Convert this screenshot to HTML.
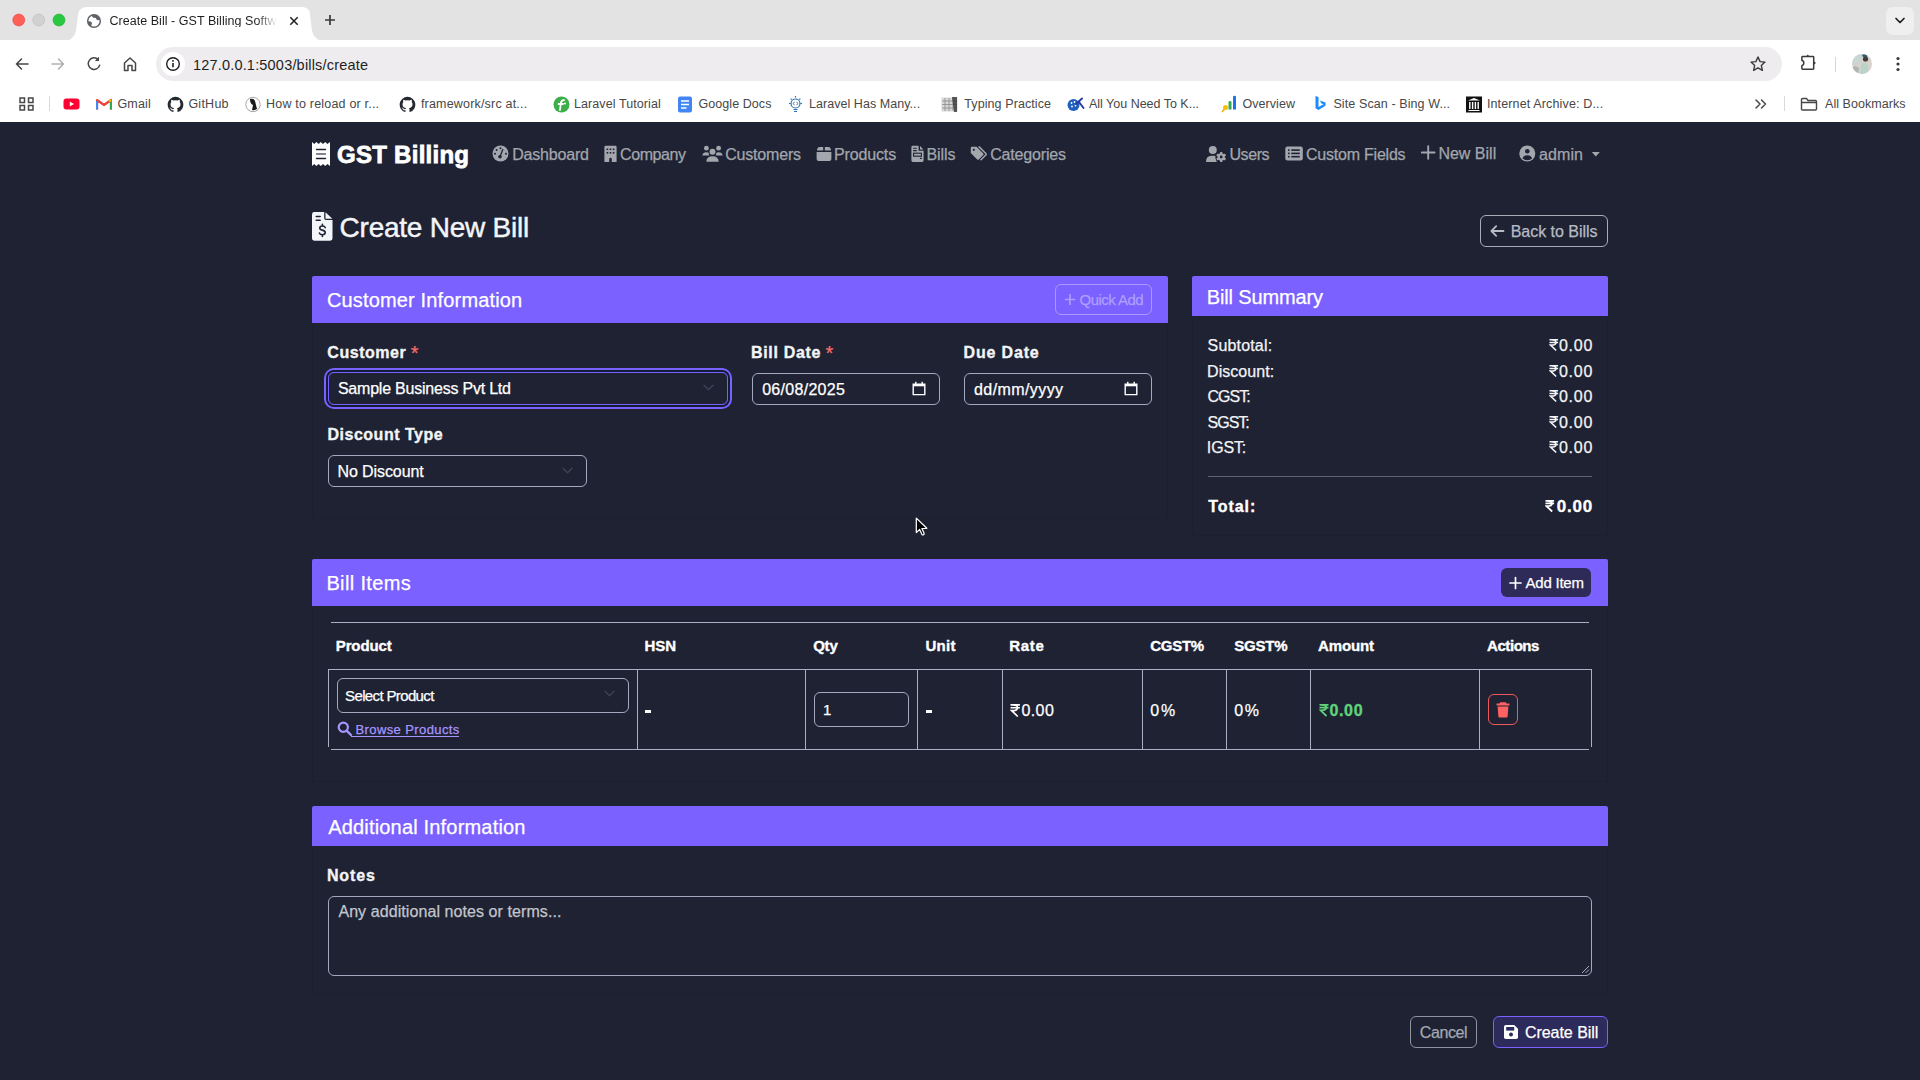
<!DOCTYPE html>
<html><head><meta charset="utf-8"><title>Create Bill - GST Billing Software</title>
<style>
html,body{margin:0;padding:0;width:1920px;height:1080px;overflow:hidden;background:#1e2233}
body{position:relative;font-family:"Liberation Sans",sans-serif}
.a{position:absolute;display:block}
.t{position:absolute;white-space:nowrap;line-height:1;font-family:"Liberation Sans",sans-serif}
.s{-webkit-text-stroke:0.25px currentColor}
.sb{-webkit-text-stroke:0.35px currentColor}
.brand{-webkit-text-stroke:0.8px currentColor}
</style></head><body>
<div class="a" style="left:0px;top:0px;width:1920px;height:41px;background:#e3e3e3"></div>
<div class="a" style="left:0px;top:40px;width:1920px;height:82px;background:#ffffff"></div>
<svg class="a" style="left:62px;top:0px;" width="264" height="41" viewBox="0 0 264 41"><path d="M0 41 Q12 41 14 31 L16 15 Q17 7 25 7 L240 7 Q248 7 248 15 L250 31 Q252 41 264 41 Z" fill="#fff"/></svg>
<svg class="a" style="left:10px;top:12px;" width="58" height="16" viewBox="0 0 58 16"><circle cx="8.75" cy="8" r="6" fill="#ff5f57" stroke="#e14640" stroke-width="0.6"/><circle cx="28.75" cy="8" r="6" fill="#d1d1d1" stroke="#bcbcbc" stroke-width="0.6"/><circle cx="49" cy="8" r="6" fill="#28c840" stroke="#1fa934" stroke-width="0.6"/></svg>
<svg class="a" style="left:86px;top:13px;" width="16" height="16" viewBox="0 0 16 16"><circle cx="8" cy="8" r="6.3" fill="none" stroke="#5f6368" stroke-width="1.5"/><path d="M6.2 1.8 Q11.5 1.2 14 6.2 Q12.8 7.6 11.2 7 Q9.8 6.2 10 5 Q9 4.6 7.2 4.8 Q5.6 4 6.2 1.8 Z" fill="#5f6368"/><path d="M1.6 8.6 Q3.4 8 5 8.8 Q6.6 9.6 5.8 11 Q5 12 5.6 14.3 Q2 12.8 1.6 8.6 Z" fill="#5f6368"/></svg>
<span class="t " style="left:109.38px;top:14.600000000000001px;font-size:12.5px;color:#1f1f1f;letter-spacing:0.044px;-webkit-mask-image:linear-gradient(90deg,#000 148px,transparent 168px);mask-image:linear-gradient(90deg,#000 148px,transparent 168px);">Create Bill - GST Billing Softw</span>
<svg class="a" style="left:289px;top:16px;" width="10" height="10" viewBox="0 0 10 10"><path d="M1.3 1.3 L8.7 8.7 M8.7 1.3 L1.3 8.7" stroke="#1f1f1f" stroke-width="1.5" stroke-linecap="butt"/></svg>
<svg class="a" style="left:324px;top:14px;" width="12" height="12" viewBox="0 0 12 12"><path d="M6 1 V11 M1 6 H11" stroke="#3b3b3b" stroke-width="1.7"/></svg>
<div class="a" style="left:1886px;top:7px;width:28px;height:28px;background:#efefef;border-radius:7px"></div>
<svg class="a" style="left:1894px;top:16px;" width="12" height="10" viewBox="0 0 12 10"><path d="M2 2.5 L6 6.5 L10 2.5" stroke="#1f1f1f" stroke-width="1.7" fill="none" stroke-linecap="round" stroke-linejoin="round"/></svg>
<svg class="a" style="left:14px;top:56px;" width="16" height="16" viewBox="0 0 16 16"><path d="M14 8 H2.5 M7.5 3 L2.5 8 L7.5 13" stroke="#474747" stroke-width="1.6" fill="none" stroke-linecap="round" stroke-linejoin="round"/></svg>
<svg class="a" style="left:50px;top:56px;" width="16" height="16" viewBox="0 0 16 16"><path d="M2 8 H13.5 M8.5 3 L13.5 8 L8.5 13" stroke="#b1b1b1" stroke-width="1.6" fill="none" stroke-linecap="round" stroke-linejoin="round"/></svg>
<svg class="a" style="left:86px;top:56px;" width="16" height="16" viewBox="0 0 16 16"><path d="M13.8 8.6 A5.8 5.8 0 1 1 12.3 3.6" stroke="#474747" stroke-width="1.5" fill="none"/><path d="M13 0.8 V5 H8.8 Z" fill="#474747"/></svg>
<svg class="a" style="left:122px;top:56px;" width="16" height="16" viewBox="0 0 16 16"><path d="M2.5 14.5 V7 L8 2 L13.5 7 V14.5 H10 V9.5 H6 V14.5 Z" stroke="#474747" stroke-width="1.5" fill="none" stroke-linejoin="round"/></svg>
<div class="a" style="left:156px;top:47px;width:1626px;height:34px;background:#eeecee;border-radius:17px"></div>
<div class="a" style="left:161px;top:52px;width:24px;height:24px;background:#ffffff;border-radius:12px"></div>
<svg class="a" style="left:165px;top:56px;" width="16" height="16" viewBox="0 0 16 16"><circle cx="8" cy="8" r="6.3" stroke="#1f1f1f" stroke-width="1.4" fill="none"/><path d="M8 7 V11.3" stroke="#1f1f1f" stroke-width="1.6"/><circle cx="8" cy="4.9" r="0.95" fill="#1f1f1f"/></svg>
<span class="t " style="left:192.91px;top:58px;font-size:14.5px;color:#1f1f1f;letter-spacing:0.195px;">127.0.0.1:5003/bills/create</span>
<svg class="a" style="left:1749px;top:55px;" width="18" height="18" viewBox="0 0 18 18"><path d="M9 2 L11.1 6.6 L16 7.1 L12.3 10.4 L13.4 15.3 L9 12.8 L4.6 15.3 L5.7 10.4 L2 7.1 L6.9 6.6 Z" stroke="#3a3a3a" stroke-width="1.4" fill="none" stroke-linejoin="round"/></svg>
<svg class="a" style="left:1800px;top:54px;" width="18" height="18" viewBox="0 0 18 18"><path d="M1.9 3.2 Q1.9 2.6 2.5 2.6 H13.1 Q13.7 2.6 13.7 3.2 V14.6 Q13.7 15.2 13.1 15.2 H2.5 Q1.9 15.2 1.9 14.6 V11.4 Q3.8 11.2 3.8 9 Q3.8 6.8 1.9 6.6 Z" stroke="#3a3a3a" stroke-width="1.5" fill="none" stroke-linejoin="round"/><path d="M5.9 2.8 L7.8 0.5 L9.7 2.8 Z M13.5 6.9 L16 8.9 L13.5 10.9 Z" fill="#3a3a3a"/></svg>
<div class="a" style="left:1835px;top:57px;width:1px;height:15px;background:#d6d6d6"></div>
<svg class="a" style="left:1851px;top:53px;" width="22" height="22" viewBox="0 0 22 22"><defs><clipPath id="avc"><circle cx="11" cy="11" r="10"/></clipPath></defs><g clip-path="url(#avc)"><rect width="22" height="22" fill="#d8d2cc"/><path d="M0 0 H22 V8 Q15 5 10 9 Q5 12 0 10 Z" fill="#c9d6d2"/><path d="M9 22 L10 12 Q11 9 14 10 Q17 11 17 15 L18 22 Z" fill="#b9d3c8"/><circle cx="14.5" cy="6" r="2.6" fill="#4b3b36"/><path d="M11 2 Q14 0 17 2 L16 4 L12 4 Z" fill="#2f5b6a"/><path d="M2 14 Q5 12 8 15 L7 22 H1 Z" fill="#9aa8a4" opacity="0.7"/></g></svg>
<svg class="a" style="left:1892px;top:55px;" width="12" height="18" viewBox="0 0 12 18"><circle cx="6" cy="3.5" r="1.6" fill="#3a3a3a"/><circle cx="6" cy="9" r="1.6" fill="#3a3a3a"/><circle cx="6" cy="14.5" r="1.6" fill="#3a3a3a"/></svg>
<svg class="a" style="left:19px;top:97px;" width="15" height="14" viewBox="0 0 15 14"><g fill="none" stroke="#474747" stroke-width="1.5"><rect x="1" y="1" width="4.5" height="4.5"/><rect x="9.5" y="1" width="4.5" height="4.5"/><rect x="1" y="8.5" width="4.5" height="4.5"/><rect x="9.5" y="8.5" width="4.5" height="4.5"/></g></svg>
<div class="a" style="left:49px;top:96px;width:1px;height:15px;background:#d9d9d9"></div>
<svg class="a" style="left:63px;top:98px;" width="18" height="12" viewBox="0 0 18 12"><rect x="0.5" y="0.5" width="16" height="11" rx="3" fill="#ff0033"/><path d="M6.8 3.5 L11 6 L6.8 8.5 Z" fill="#fff"/></svg>
<svg class="a" style="left:96px;top:98px;" width="16" height="12" viewBox="0 0 16 12"><path d="M1 11.5 V2 L8 7 L15 2 V11.5" fill="none" stroke="#ea4335" stroke-width="2.2" stroke-linejoin="round"/><path d="M1 11.5 V3" stroke="#4285f4" stroke-width="2.2"/><path d="M15 11.5 V3" stroke="#34a853" stroke-width="2.2"/><path d="M13 3.5 L15 2" stroke="#fbbc04" stroke-width="2.2"/></svg>
<span class="t " style="left:117.38px;top:97.7px;font-size:12.5px;color:#474747;letter-spacing:0.188px;">Gmail</span>
<svg class="a" style="left:167px;top:96px;" width="17" height="17" viewBox="0 0 17 17"><path d="M8.5 0.8 A7.8 7.8 0 0 0 6 16 C6.4 16.1 6.5 15.8 6.5 15.6 V14.2 C4.3 14.7 3.9 13.2 3.9 13.2 C3.5 12.3 3 12 3 12 C2.3 11.5 3.1 11.5 3.1 11.5 C3.9 11.6 4.3 12.3 4.3 12.3 C5 13.5 6.1 13.2 6.6 13 C6.6 12.5 6.9 12.2 7.1 12 C5.3 11.8 3.5 11.1 3.5 8 C3.5 7.1 3.8 6.4 4.3 5.9 C4.2 5.7 3.9 4.9 4.4 3.8 C4.4 3.8 5.1 3.6 6.5 4.6 A7.5 7.5 0 0 1 10.5 4.6 C11.9 3.6 12.6 3.8 12.6 3.8 C13.1 4.9 12.8 5.7 12.7 5.9 C13.2 6.4 13.5 7.1 13.5 8 C13.5 11.1 11.7 11.8 9.9 12 C10.2 12.2 10.5 12.7 10.5 13.5 V15.6 C10.5 15.8 10.6 16.1 11 16 A7.8 7.8 0 0 0 8.5 0.8 Z" fill="#24292f"/></svg>
<span class="t " style="left:188.38px;top:97.7px;font-size:12.5px;color:#474747;letter-spacing:0.250px;">GitHub</span>
<svg class="a" style="left:245px;top:96px;" width="16" height="17" viewBox="0 0 16 17"><circle cx="8" cy="8.5" r="7.2" fill="none" stroke="#9a9a9a" stroke-width="0.9"/><path d="M5 3 Q9 2 10 5 L12 13 Q9 15 7 14 L8 9 Q5 8 5 3 Z" fill="#1a1a1a"/></svg>
<span class="t " style="left:266.00px;top:97.7px;font-size:12.5px;color:#474747;letter-spacing:0.200px;">How to reload or r...</span>
<svg class="a" style="left:399px;top:96px;" width="17" height="17" viewBox="0 0 17 17"><path d="M8.5 0.8 A7.8 7.8 0 0 0 6 16 C6.4 16.1 6.5 15.8 6.5 15.6 V14.2 C4.3 14.7 3.9 13.2 3.9 13.2 C3.5 12.3 3 12 3 12 C2.3 11.5 3.1 11.5 3.1 11.5 C3.9 11.6 4.3 12.3 4.3 12.3 C5 13.5 6.1 13.2 6.6 13 C6.6 12.5 6.9 12.2 7.1 12 C5.3 11.8 3.5 11.1 3.5 8 C3.5 7.1 3.8 6.4 4.3 5.9 C4.2 5.7 3.9 4.9 4.4 3.8 C4.4 3.8 5.1 3.6 6.5 4.6 A7.5 7.5 0 0 1 10.5 4.6 C11.9 3.6 12.6 3.8 12.6 3.8 C13.1 4.9 12.8 5.7 12.7 5.9 C13.2 6.4 13.5 7.1 13.5 8 C13.5 11.1 11.7 11.8 9.9 12 C10.2 12.2 10.5 12.7 10.5 13.5 V15.6 C10.5 15.8 10.6 16.1 11 16 A7.8 7.8 0 0 0 8.5 0.8 Z" fill="#24292f"/></svg>
<span class="t " style="left:420.88px;top:97.7px;font-size:12.5px;color:#474747;letter-spacing:0.191px;">framework/src at...</span>
<svg class="a" style="left:553px;top:96px;" width="17" height="17" viewBox="0 0 17 17"><circle cx="8.5" cy="8.5" r="8" fill="#3dae4a"/><path d="M7 14 L7.8 7.5 Q8.2 4 11 4.2 M5.5 8 H10" stroke="#fff" stroke-width="1.8" fill="none" stroke-linecap="round"/><circle cx="12" cy="7.5" r="1" fill="#fff"/></svg>
<span class="t " style="left:574.00px;top:97.7px;font-size:12.5px;color:#474747;letter-spacing:0.087px;">Laravel Tutorial</span>
<svg class="a" style="left:677px;top:96px;" width="16" height="17" viewBox="0 0 16 17"><rect x="1" y="0.5" width="14" height="16" rx="2" fill="#4285f4"/><path d="M4 5 H12 M4 8.5 H12 M4 12 H9.5" stroke="#fff" stroke-width="1.6"/></svg>
<span class="t " style="left:698.38px;top:97.7px;font-size:12.5px;color:#474747;letter-spacing:0.081px;">Google Docs</span>
<svg class="a" style="left:787px;top:95px;" width="17" height="18" viewBox="0 0 17 18"><g stroke="#2a6fb5" stroke-width="1.2" fill="none"><circle cx="8.5" cy="8.5" r="4.5"/><path d="M8.5 1 V2.5 M2 8.5 H3.5 M13.5 8.5 H15 M3.7 3.7 L4.7 4.7 M13.3 3.7 L12.3 4.7 M6.5 14.5 H10.5 M7 16.5 H10"/></g><path d="M7.3 6.8 L6.3 8.5 L7.3 10.2 M9.7 6.8 L10.7 8.5 L9.7 10.2" stroke="#2a6fb5" stroke-width="0.9" fill="none"/></svg>
<span class="t " style="left:809.00px;top:97.7px;font-size:12.5px;color:#474747;letter-spacing:0.049px;">Laravel Has Many...</span>
<svg class="a" style="left:941px;top:96px;" width="17" height="17" viewBox="0 0 17 17"><rect x="0.5" y="1.5" width="16" height="14" fill="#d8d8d8"/><g stroke="#8a8a8a" stroke-width="0.8"><path d="M1 5 H16 M1 8.5 H16 M1 12 H16 M4 2 V15 M8 2 V15 M12 2 V15"/></g><path d="M11 1 L16 1 L16 16 L13 16 Z" fill="#333" opacity="0.8"/></svg>
<span class="t " style="left:964.25px;top:97.7px;font-size:12.5px;color:#474747;letter-spacing:0.094px;">Typing Practice</span>
<svg class="a" style="left:1067px;top:96px;" width="18" height="17" viewBox="0 0 18 17"><circle cx="6.5" cy="9" r="6" fill="#1f5fbf"/><g fill="#fff"><circle cx="4.5" cy="7" r="0.9"/><circle cx="7.5" cy="6" r="0.9"/><circle cx="5" cy="10.5" r="0.9"/><circle cx="8.5" cy="9.5" r="0.9"/></g><path d="M9 8 L15 2.5 M12 6 L16.5 12" stroke="#2a3f9f" stroke-width="2" stroke-linecap="round"/></svg>
<span class="t " style="left:1089.00px;top:97.7px;font-size:12.5px;color:#474747;letter-spacing:-0.010px;">All You Need To K...</span>
<svg class="a" style="left:1221px;top:95px;" width="17" height="18" viewBox="0 0 17 18"><path d="M12 2 Q12 0.8 13.5 0.8 Q15 0.8 15 2 V14.5 H12 Z" fill="#1a73e8"/><path d="M7.5 7 Q7.5 6 9 6 Q10.5 6 10.5 7 V14.5 H7.5 Z" fill="#34a853"/><circle cx="4.5" cy="12.5" r="2.5" fill="#fbbc04"/><path d="M1 17 L3.5 14" stroke="#f9ab00" stroke-width="1.5"/></svg>
<span class="t " style="left:1242.44px;top:97.7px;font-size:12.5px;color:#474747;letter-spacing:0.062px;">Overview</span>
<svg class="a" style="left:1314px;top:95px;" width="13" height="18" viewBox="0 0 13 18"><path d="M1.5 1 L4.5 2 V12 L9.5 9.3 L7.2 8.2 L6 5.5 L11.5 7.5 V10.8 L4.5 15 L1.5 13.3 Z" fill="#1a8cff"/></svg>
<span class="t " style="left:1333.44px;top:97.7px;font-size:12.5px;color:#474747;letter-spacing:0.100px;">Site Scan - Bing W...</span>
<svg class="a" style="left:1466px;top:96px;" width="16" height="17" viewBox="0 0 16 17"><rect x="0" y="0.5" width="16" height="16" fill="#111"/><path d="M2 4.5 L8 2 L14 4.5 Z M2.5 14 H13.5 V15 H2.5 Z" fill="#fff"/><g stroke="#fff" stroke-width="1.4"><path d="M3.8 6 V13 M6.6 6 V13 M9.4 6 V13 M12.2 6 V13"/></g></svg>
<span class="t " style="left:1486.88px;top:97.7px;font-size:12.5px;color:#474747;letter-spacing:0.143px;">Internet Archive: D...</span>
<svg class="a" style="left:1754px;top:98px;" width="14" height="12" viewBox="0 0 14 12"><path d="M2 2 L6 6 L2 10 M7.5 2 L11.5 6 L7.5 10" stroke="#474747" stroke-width="1.5" fill="none" stroke-linecap="round" stroke-linejoin="round"/></svg>
<div class="a" style="left:1784px;top:96px;width:1px;height:15px;background:#d9d9d9"></div>
<svg class="a" style="left:1800px;top:97px;" width="18" height="14" viewBox="0 0 18 14"><path d="M1.5 2.5 Q1.5 1.5 2.5 1.5 H6.5 L8 3.5 H15.5 Q16.5 3.5 16.5 4.5 V12 Q16.5 13 15.5 13 H2.5 Q1.5 13 1.5 12 Z M1.5 5.5 H16.5" stroke="#474747" stroke-width="1.4" fill="none" stroke-linejoin="round"/></svg>
<span class="t " style="left:1825.00px;top:97.7px;font-size:12.5px;color:#474747;letter-spacing:0.047px;">All Bookmarks</span>
<div class="a" style="left:0px;top:122px;width:1920px;height:958px;background:#1e2233"></div>
<svg class="a" style="left:311px;top:141px;" width="20" height="26" viewBox="0 0 20 26"><path d="M1 1 L3.2 3 L5.4 1 L7.6 3 L9.8 1 L12 3 L14.2 1 L16.4 3 L19 1 V25 L16.4 23 L14.2 25 L12 23 L9.8 25 L7.6 23 L5.4 25 L3.2 23 L1 25 Z" fill="#fff"/><path d="M5.5 8.5 H14.5 M5.5 17.5 H14.5" stroke="#1e2233" stroke-width="1.4" stroke-linecap="round"/><path d="M5.5 13 H14.5" stroke="#5a5e6e" stroke-width="1.4" stroke-linecap="round"/></svg>
<span class="t brand sb" style="left:337.04px;top:142.5px;font-size:24px;color:#ffffff;font-weight:700;letter-spacing:0.266px;">GST Billing</span>
<svg class="a" style="left:492px;top:145px;" width="17" height="17" viewBox="0 0 17 17"><circle cx="8.5" cy="8.5" r="8" fill="#a3a6ad"/><g fill="#1e2233"><circle cx="8.5" cy="3.3" r="1"/><circle cx="4.6" cy="4.9" r="1"/><circle cx="3" cy="8.8" r="1"/><circle cx="14" cy="8.8" r="1"/><circle cx="8" cy="11.8" r="1.8"/></g><path d="M8 11.8 L10.8 4.6" stroke="#1e2233" stroke-width="1.3" stroke-linecap="round"/></svg>
<span class="t s" style="left:512.22px;top:147px;font-size:16px;color:#a3a6ad;letter-spacing:-0.188px;">Dashboard</span>
<svg class="a" style="left:604px;top:145px;" width="13" height="18" viewBox="0 0 13 18"><path d="M1.5 0.8 H11.5 Q12.6 0.8 12.6 1.9 V17 H7.8 V14.2 Q7.8 12.8 6.5 12.8 Q5.2 12.8 5.2 14.2 V17 H0.4 V1.9 Q0.4 0.8 1.5 0.8 Z" fill="#a3a6ad"/><g fill="#1e2233"><rect x="2.6" y="3.5" width="1.6" height="1.6"/><rect x="5.7" y="3.5" width="1.6" height="1.6"/><rect x="8.8" y="3.5" width="1.6" height="1.6"/><rect x="2.6" y="7" width="1.6" height="1.6"/><rect x="5.7" y="7" width="1.6" height="1.6"/><rect x="8.8" y="7" width="1.6" height="1.6"/></g></svg>
<span class="t s" style="left:620.00px;top:147px;font-size:16px;color:#a3a6ad;letter-spacing:-0.413px;">Company</span>
<svg class="a" style="left:702px;top:145px;" width="21" height="18" viewBox="0 0 21 18"><g fill="#a3a6ad"><circle cx="4.4" cy="3.2" r="2.4"/><circle cx="16.6" cy="3.2" r="2.4"/><circle cx="10.5" cy="6.8" r="3"/><path d="M0.3 10.6 Q0.8 7.2 4.4 7.2 Q6 7.2 6.8 8 Q6.6 9.6 7.2 10.6 Z"/><path d="M20.7 10.6 Q20.2 7.2 16.6 7.2 Q15 7.2 14.2 8 Q14.4 9.6 13.8 10.6 Z"/><path d="M4.3 16.8 Q4.5 11.3 10.5 11.3 Q16.5 11.3 16.7 16.8 Z"/></g></svg>
<span class="t s" style="left:725.20px;top:147px;font-size:16px;color:#a3a6ad;letter-spacing:-0.188px;">Customers</span>
<svg class="a" style="left:816px;top:146px;" width="16" height="16" viewBox="0 0 16 16"><g fill="#a3a6ad"><path d="M1.2 3.2 Q1.6 1 3.6 1 H7.2 V4.6 H1 Z"/><path d="M8.8 1 H12.4 Q14.4 1 14.8 3.2 L15 4.6 H8.8 Z"/><path d="M0.6 6 H15.4 V13 Q15.4 15 13.4 15 H2.6 Q0.6 15 0.6 13 Z"/></g></svg>
<span class="t s" style="left:833.92px;top:147px;font-size:16px;color:#a3a6ad;letter-spacing:-0.126px;">Products</span>
<svg class="a" style="left:911px;top:145px;" width="13" height="18" viewBox="0 0 13 18"><path d="M0.4 2.2 Q0.4 0.8 1.8 0.8 H7.6 V5.2 Q7.6 5.8 8.2 5.8 H12.6 V15.6 Q12.6 17 11.2 17 H1.8 Q0.4 17 0.4 15.6 Z M9 0.9 L12.5 4.4 H9 Z" fill="#a3a6ad"/><g stroke="#1e2233" stroke-width="1.1" stroke-linecap="round"><path d="M2.6 3.3 H5.4 M2.6 5.6 H5.4 M9.4 13.4 H10.4"/></g><rect x="2.6" y="8.2" width="7.8" height="3" fill="none" stroke="#1e2233" stroke-width="1.1"/></svg>
<span class="t s" style="left:926.52px;top:147px;font-size:16px;color:#a3a6ad;letter-spacing:-0.080px;">Bills</span>
<svg class="a" style="left:970px;top:146px;" width="18" height="16" viewBox="0 0 18 16"><path d="M0.8 1.8 Q0.8 0.8 1.8 0.8 H6.6 L13.2 7.4 Q14 8.2 13.2 9 L8.8 13.4 Q8 14.2 7.2 13.4 L0.8 7 Z" fill="#a3a6ad"/><circle cx="3.8" cy="3.8" r="1.1" fill="#1e2233"/><path d="M9.2 0.9 L15.8 7.5 Q16.6 8.2 15.8 9 L11 13.8" stroke="#a3a6ad" stroke-width="1.5" fill="none" stroke-linecap="round"/></svg>
<span class="t s" style="left:990.20px;top:147px;font-size:16px;color:#a3a6ad;letter-spacing:-0.167px;">Categories</span>
<svg class="a" style="left:1205px;top:145px;" width="22" height="18" viewBox="0 0 22 18"><g fill="#a3a6ad"><circle cx="7.8" cy="4.9" r="4"/><path d="M1 16.9 Q1 10.8 6.6 10.8 H9 Q10.4 10.8 11.3 11.2 Q10.2 14 11.8 16.9 Z"/></g><g transform="translate(16.2 12)"><circle r="5.9" fill="#1e2233"/><g fill="#a3a6ad"><circle r="3.7"/><rect x="-1.1" y="-5" width="2.2" height="10"/><rect x="-1.1" y="-5" width="2.2" height="10" transform="rotate(60)"/><rect x="-1.1" y="-5" width="2.2" height="10" transform="rotate(120)"/></g><circle r="1.4" fill="#1e2233"/></g></svg>
<span class="t s" style="left:1229.40px;top:147px;font-size:16px;color:#a3a6ad;letter-spacing:-0.400px;">Users</span>
<svg class="a" style="left:1285px;top:146px;" width="18" height="15" viewBox="0 0 18 15"><rect x="0.3" y="0.5" width="17.5" height="14" rx="2.2" fill="#a3a6ad"/><g fill="#1e2233"><rect x="3" y="3.3" width="1.6" height="1.6"/><rect x="3" y="6.6" width="1.6" height="1.6"/><rect x="3" y="9.9" width="1.6" height="1.6"/><rect x="6.3" y="3.3" width="8.5" height="1.6"/><rect x="6.3" y="6.6" width="8.5" height="1.6"/><rect x="6.3" y="9.9" width="8.5" height="1.6"/></g></svg>
<span class="t s" style="left:1306.00px;top:147px;font-size:16px;color:#a3a6ad;letter-spacing:-0.223px;">Custom Fields</span>
<svg class="a" style="left:1421px;top:145px;" width="15" height="15" viewBox="0 0 15 15"><path d="M7.2 1.3 V13.8 M0.9 7.5 H13.6" stroke="#a3a6ad" stroke-width="1.9" stroke-linecap="round"/></svg>
<span class="t s" style="left:1438.42px;top:146.4px;font-size:16px;color:#a3a6ad;">New Bill</span>
<svg class="a" style="left:1519px;top:145px;" width="17" height="17" viewBox="0 0 17 17"><circle cx="8.3" cy="8.5" r="8" fill="#a3a6ad"/><circle cx="8.3" cy="6.3" r="2.3" fill="#1e2233"/><path d="M3.5 13.6 Q4.6 10.2 8.3 10.2 Q12 10.2 13.1 13.6 Q11.2 15.2 8.3 15.2 Q5.4 15.2 3.5 13.6 Z" fill="#1e2233"/></svg>
<span class="t s" style="left:1539.06px;top:146.9px;font-size:16px;color:#a3a6ad;letter-spacing:0.075px;">admin</span>
<svg class="a" style="left:1591px;top:151px;" width="10" height="7" viewBox="0 0 10 7"><path d="M0.8 1 H8.8 L4.8 5.6 Z" fill="#a3a6ad"/></svg>
<svg class="a" style="left:311px;top:211px;" width="23" height="31" viewBox="0 0 23 31"><path d="M2.8 1 H13.2 V7.2 Q13.2 9 15 9 H21.5 V27 Q21.5 29.8 18.7 29.8 H3.8 Q1 29.8 1 27 V3.8 Q1 1 2.8 1 Z M14.5 1.2 L21.4 7.8 H14.5 Z" fill="#f3f5f8"/><path d="M5.2 5.6 H9.2 M5.2 9.2 H9.2" stroke="#1e2233" stroke-width="1.5" stroke-linecap="round"/><path d="M14.2 16.6 Q13.8 15 11.4 15 Q8.8 15 8.8 16.9 Q8.8 18.6 11.3 19.1 Q14.2 19.7 14.2 21.6 Q14.2 23.7 11.3 23.7 Q9 23.7 8.4 22 M11.4 13.4 V15 M11.4 23.7 V25.4" stroke="#1e2233" stroke-width="1.6" fill="none" stroke-linecap="round"/></svg>
<span class="t s" style="left:339.60px;top:214px;font-size:28px;color:#f3f5f8;letter-spacing:-0.239px;-webkit-text-stroke:0.45px currentColor;">Create New Bill</span>
<div class="a" style="left:1480px;top:215px;width:128px;height:32px;box-sizing:border-box;border:1px solid #a8adb8;border-radius:6px"></div>
<svg class="a" style="left:1489px;top:224px;" width="16" height="14" viewBox="0 0 16 14"><path d="M14.5 7 H2.5 M7.2 2.2 L2.4 7 L7.2 11.8" stroke="#b7bbc4" stroke-width="1.8" fill="none" stroke-linecap="round" stroke-linejoin="round"/></svg>
<span class="t s" style="left:1510.72px;top:223.5px;font-size:16px;color:#b7bbc4;letter-spacing:-0.023px;">Back to Bills</span>
<div class="a" style="left:312px;top:276px;width:856px;height:243px;box-sizing:border-box;border:1px solid rgba(0,0,0,0.08);border-radius:3px"></div>
<div class="a" style="left:312px;top:276px;width:856px;height:47px;background:#7b61ff;border-radius:2px 2px 0 0"></div>
<span class="t s" style="left:327.00px;top:290.2px;font-size:20px;color:#ffffff;letter-spacing:0.153px;">Customer Information</span>
<div class="a" style="left:1055px;top:284px;width:97px;height:31px;box-sizing:border-box;border:1px solid rgba(200,188,255,0.6);border-radius:6px"></div>
<svg class="a" style="left:1064px;top:293px;" width="12" height="13" viewBox="0 0 12 13"><path d="M6 1 V12 M0.8 6.5 H11.2" stroke="#ad9fff" stroke-width="1.6"/></svg>
<span class="t s" style="left:1079.62px;top:292.2px;font-size:15px;color:#ad9fff;letter-spacing:-0.544px;">Quick Add</span>
<span class="t sb" style="left:327.36px;top:344.8px;font-size:16px;color:#f3f4f6;font-weight:700;letter-spacing:0.523px;">Customer</span>
<span class="t s" style="left:410.70px;top:343px;font-size:20px;color:#f26b6b;">*</span>
<div class="a" style="left:328px;top:372px;width:400px;height:33px;box-sizing:border-box;border:1px solid #7b61ff;border-radius:6px;box-shadow:0 0 0 2px #0f1d36,0 0 0 4px #7b61ff"></div>
<span class="t s" style="left:337.88px;top:380.6px;font-size:16px;color:#ffffff;letter-spacing:-0.216px;">Sample Business Pvt Ltd</span>
<svg class="a" style="left:703px;top:384px;" width="12" height="8" viewBox="0 0 12 8"><path d="M1 1.2 L5.5 5.8 L10 1.2" stroke="#3e4356" stroke-width="1.3" fill="none" stroke-linecap="round" stroke-linejoin="round"/></svg>
<span class="t sb" style="left:750.96px;top:344.8px;font-size:16px;color:#f3f4f6;font-weight:700;letter-spacing:0.690px;">Bill Date</span>
<span class="t s" style="left:825.40px;top:343px;font-size:20px;color:#f26b6b;">*</span>
<div class="a" style="left:752px;top:373px;width:188px;height:32px;box-sizing:border-box;border:1px solid #a3aac0;border-radius:6px"></div>
<span class="t s" style="left:762.14px;top:382px;font-size:16px;color:#ffffff;letter-spacing:0.302px;">06/08/2025</span>
<svg class="a" style="left:912px;top:381px;" width="14" height="15" viewBox="0 0 14 15"><path d="M1.2 3.2 H12.8 V13.6 H1.2 Z" fill="none" stroke="#ffffff" stroke-width="1.4"/><path d="M1.2 4.2 H12.8" stroke="#fff" stroke-width="2.2"/><path d="M3.8 0.8 V3 M10.2 0.8 V3" stroke="#fff" stroke-width="1.4"/></svg>
<span class="t sb" style="left:963.56px;top:345px;font-size:16px;color:#f3f4f6;font-weight:700;letter-spacing:0.837px;">Due Date</span>
<div class="a" style="left:964px;top:373px;width:188px;height:32px;box-sizing:border-box;border:1px solid #a3aac0;border-radius:6px"></div>
<span class="t s" style="left:974.06px;top:381.6px;font-size:16px;color:#ffffff;letter-spacing:0.409px;">dd/mm/yyyy</span>
<svg class="a" style="left:1124px;top:381px;" width="14" height="15" viewBox="0 0 14 15"><path d="M1.2 3.2 H12.8 V13.6 H1.2 Z" fill="none" stroke="#ffffff" stroke-width="1.4"/><path d="M1.2 4.2 H12.8" stroke="#fff" stroke-width="2.2"/><path d="M3.8 0.8 V3 M10.2 0.8 V3" stroke="#fff" stroke-width="1.4"/></svg>
<span class="t sb" style="left:327.46px;top:426.7px;font-size:16px;color:#f3f4f6;font-weight:700;letter-spacing:0.515px;">Discount Type</span>
<div class="a" style="left:328px;top:455px;width:259px;height:32px;box-sizing:border-box;border:1px solid #a3aac0;border-radius:6px"></div>
<span class="t s" style="left:337.42px;top:463.9px;font-size:16px;color:#ffffff;letter-spacing:-0.084px;">No Discount</span>
<svg class="a" style="left:562px;top:467px;" width="12" height="8" viewBox="0 0 12 8"><path d="M1 1.2 L5.5 5.8 L10 1.2" stroke="#3e4356" stroke-width="1.3" fill="none" stroke-linecap="round" stroke-linejoin="round"/></svg>
<div class="a" style="left:1192px;top:276px;width:416px;height:260px;box-sizing:border-box;border:1px solid rgba(0,0,0,0.08);border-radius:3px"></div>
<div class="a" style="left:1192px;top:276px;width:416px;height:40px;background:#7b61ff;border-radius:2px 2px 0 0"></div>
<span class="t s" style="left:1206.70px;top:287.2px;font-size:20px;color:#ffffff;letter-spacing:-0.136px;">Bill Summary</span>
<span class="t s" style="left:1207.58px;top:337.7px;font-size:16px;color:#f3f4f6;letter-spacing:0.170px;">Subtotal:</span>
<svg class="a" style="left:1549px;top:339.2px;" width="10.58" height="12.5" viewBox="0 0 10.58 12.5"><g transform="scale(0.9583)" style="color:#f3f4f6"><path d="M0.5 0.8 H9.5 M0.5 3.6 H9.5 M2.3 0.8 Q7.3 0.8 7.3 3.6 Q7.3 6.4 2.3 6.4 H1.6 L7.5 12" fill="none" stroke="currentColor" stroke-width="1.670" stroke-linejoin="miter"/></g></svg>
<span class="t s" style="left:1558.94px;top:337.7px;font-size:16px;color:#f3f4f6;letter-spacing:0.733px;">0.00</span>
<span class="t s" style="left:1207.02px;top:363.7px;font-size:16px;color:#f3f4f6;letter-spacing:0.062px;">Discount:</span>
<svg class="a" style="left:1549px;top:365.2px;" width="10.58" height="12.5" viewBox="0 0 10.58 12.5"><g transform="scale(0.9583)" style="color:#f3f4f6"><path d="M0.5 0.8 H9.5 M0.5 3.6 H9.5 M2.3 0.8 Q7.3 0.8 7.3 3.6 Q7.3 6.4 2.3 6.4 H1.6 L7.5 12" fill="none" stroke="currentColor" stroke-width="1.670" stroke-linejoin="miter"/></g></svg>
<span class="t s" style="left:1558.94px;top:363.7px;font-size:16px;color:#f3f4f6;letter-spacing:0.733px;">0.00</span>
<span class="t s" style="left:1207.50px;top:388.9px;font-size:16px;color:#f3f4f6;letter-spacing:-0.970px;">CGST:</span>
<svg class="a" style="left:1549px;top:390.4px;" width="10.58" height="12.5" viewBox="0 0 10.58 12.5"><g transform="scale(0.9583)" style="color:#f3f4f6"><path d="M0.5 0.8 H9.5 M0.5 3.6 H9.5 M2.3 0.8 Q7.3 0.8 7.3 3.6 Q7.3 6.4 2.3 6.4 H1.6 L7.5 12" fill="none" stroke="currentColor" stroke-width="1.670" stroke-linejoin="miter"/></g></svg>
<span class="t s" style="left:1558.94px;top:388.9px;font-size:16px;color:#f3f4f6;letter-spacing:0.733px;">0.00</span>
<span class="t s" style="left:1207.58px;top:414.8px;font-size:16px;color:#f3f4f6;letter-spacing:-1.020px;">SGST:</span>
<svg class="a" style="left:1549px;top:416.3px;" width="10.58" height="12.5" viewBox="0 0 10.58 12.5"><g transform="scale(0.9583)" style="color:#f3f4f6"><path d="M0.5 0.8 H9.5 M0.5 3.6 H9.5 M2.3 0.8 Q7.3 0.8 7.3 3.6 Q7.3 6.4 2.3 6.4 H1.6 L7.5 12" fill="none" stroke="currentColor" stroke-width="1.670" stroke-linejoin="miter"/></g></svg>
<span class="t s" style="left:1558.94px;top:414.8px;font-size:16px;color:#f3f4f6;letter-spacing:0.733px;">0.00</span>
<span class="t s" style="left:1206.86px;top:439.6px;font-size:16px;color:#f3f4f6;letter-spacing:-0.175px;">IGST:</span>
<svg class="a" style="left:1549px;top:441.1px;" width="10.58" height="12.5" viewBox="0 0 10.58 12.5"><g transform="scale(0.9583)" style="color:#f3f4f6"><path d="M0.5 0.8 H9.5 M0.5 3.6 H9.5 M2.3 0.8 Q7.3 0.8 7.3 3.6 Q7.3 6.4 2.3 6.4 H1.6 L7.5 12" fill="none" stroke="currentColor" stroke-width="1.670" stroke-linejoin="miter"/></g></svg>
<span class="t s" style="left:1558.94px;top:439.6px;font-size:16px;color:#f3f4f6;letter-spacing:0.733px;">0.00</span>
<div class="a" style="left:1208px;top:476px;width:384px;height:1px;background:#5d6272"></div>
<span class="t sb" style="left:1208.14px;top:498.5px;font-size:16px;color:#ffffff;font-weight:700;letter-spacing:0.976px;">Total:</span>
<svg class="a" style="left:1544.5px;top:500px;" width="10.58" height="12.5" viewBox="0 0 10.58 12.5"><g transform="scale(0.9583)" style="color:#ffffff"><path d="M0.5 0.8 H9.5 M0.5 3.6 H9.5 M2.3 0.8 Q7.3 0.8 7.3 3.6 Q7.3 6.4 2.3 6.4 H1.6 L7.5 12" fill="none" stroke="currentColor" stroke-width="1.878" stroke-linejoin="miter"/></g></svg>
<span class="t sb" style="left:1556.70px;top:497.8px;font-size:17px;color:#ffffff;font-weight:700;letter-spacing:0.842px;">0.00</span>
<div class="a" style="left:312px;top:559px;width:1296px;height:223px;box-sizing:border-box;border:1px solid rgba(0,0,0,0.08);border-radius:3px"></div>
<div class="a" style="left:312px;top:559px;width:1296px;height:47px;background:#7b61ff;border-radius:2px 2px 0 0"></div>
<span class="t s" style="left:326.40px;top:573px;font-size:20px;color:#ffffff;letter-spacing:0.356px;">Bill Items</span>
<div class="a" style="left:1501px;top:568px;width:90px;height:29px;background:#2e2b58;border-radius:6px"></div>
<svg class="a" style="left:1509px;top:576px;" width="13" height="14" viewBox="0 0 13 14"><path d="M6.5 1.5 V12.5 M1 7 H12" stroke="#ffffff" stroke-width="1.7" stroke-linecap="round"/></svg>
<span class="t s" style="left:1525.60px;top:575.1px;font-size:15px;color:#ffffff;letter-spacing:-0.243px;">Add Item</span>
<div class="a" style="left:331px;top:622px;width:1258px;height:1px;background:#a9b0c3"></div>
<span class="t sb" style="left:335.72px;top:638px;font-size:15px;color:#ffffff;font-weight:700;letter-spacing:-0.096px;">Product</span>
<span class="t sb" style="left:644.42px;top:638px;font-size:15px;color:#ffffff;font-weight:700;letter-spacing:-0.050px;">HSN</span>
<span class="t sb" style="left:813.15px;top:638px;font-size:15px;color:#ffffff;font-weight:700;letter-spacing:-0.187px;">Qty</span>
<span class="t sb" style="left:925.40px;top:638px;font-size:15px;color:#ffffff;font-weight:700;letter-spacing:0.292px;">Unit</span>
<span class="t sb" style="left:1009.27px;top:638px;font-size:15px;color:#ffffff;font-weight:700;letter-spacing:0.650px;">Rate</span>
<span class="t sb" style="left:1150.30px;top:638px;font-size:15px;color:#ffffff;font-weight:700;letter-spacing:-0.294px;">CGST%</span>
<span class="t sb" style="left:1234.33px;top:638px;font-size:15px;color:#ffffff;font-weight:700;letter-spacing:-0.244px;">SGST%</span>
<span class="t sb" style="left:1318.12px;top:638px;font-size:15px;color:#ffffff;font-weight:700;letter-spacing:-0.135px;">Amount</span>
<span class="t sb" style="left:1487.03px;top:638px;font-size:15px;color:#ffffff;font-weight:700;letter-spacing:-0.429px;">Actions</span>
<div class="a" style="left:328px;top:669px;width:1264px;height:1px;background:#a9b0c3"></div>
<div class="a" style="left:331px;top:749px;width:1258px;height:1px;background:#a9b0c3"></div>
<div class="a" style="left:328px;top:669px;width:1px;height:78px;background:#a9b0c3"></div>
<div class="a" style="left:1591px;top:669px;width:1px;height:78px;background:#a9b0c3"></div>
<div class="a" style="left:637px;top:669px;width:1px;height:81px;background:#a9b0c3"></div>
<div class="a" style="left:805px;top:669px;width:1px;height:81px;background:#a9b0c3"></div>
<div class="a" style="left:917px;top:669px;width:1px;height:81px;background:#a9b0c3"></div>
<div class="a" style="left:1002px;top:669px;width:1px;height:81px;background:#a9b0c3"></div>
<div class="a" style="left:1142px;top:669px;width:1px;height:81px;background:#a9b0c3"></div>
<div class="a" style="left:1226px;top:669px;width:1px;height:81px;background:#a9b0c3"></div>
<div class="a" style="left:1310px;top:669px;width:1px;height:81px;background:#a9b0c3"></div>
<div class="a" style="left:1479px;top:669px;width:1px;height:81px;background:#a9b0c3"></div>
<div class="a" style="left:337px;top:678px;width:292px;height:35px;box-sizing:border-box;border:1px solid #a3aac0;border-radius:6px"></div>
<span class="t s" style="left:345.12px;top:688px;font-size:15px;color:#ffffff;letter-spacing:-0.640px;">Select Product</span>
<svg class="a" style="left:604px;top:690px;" width="12" height="8" viewBox="0 0 12 8"><path d="M1 1.2 L5.5 5.8 L10 1.2" stroke="#3e4356" stroke-width="1.3" fill="none" stroke-linecap="round" stroke-linejoin="round"/></svg>
<svg class="a" style="left:337px;top:721px;" width="16" height="17" viewBox="0 0 16 17"><circle cx="6.3" cy="6.3" r="4.6" stroke="#a894ff" stroke-width="2.2" fill="none"/><path d="M9.6 9.6 L14 14" stroke="#a894ff" stroke-width="2.4" stroke-linecap="round"/></svg>
<span class="t s" style="left:355.46px;top:723.3px;font-size:13px;color:#a894ff;letter-spacing:0.401px;">Browse Products</span>
<div class="a" style="left:351px;top:736px;width:108px;height:1px;background:#a894ff"></div>
<div class="a" style="left:645px;top:710px;width:6px;height:2.5px;background:#ffffff"></div>
<div class="a" style="left:814px;top:692px;width:95px;height:35px;box-sizing:border-box;border:1px solid #a3aac0;border-radius:6px"></div>
<span class="t s" style="left:822.88px;top:702px;font-size:15px;color:#ffffff;">1</span>
<div class="a" style="left:926px;top:710px;width:6px;height:2.5px;background:#ffffff"></div>
<svg class="a" style="left:1010px;top:703.5px;" width="11.42" height="13.5" viewBox="0 0 11.42 13.5"><g transform="scale(1.0417)" style="color:#ffffff"><path d="M0.5 0.8 H9.5 M0.5 3.6 H9.5 M2.3 0.8 Q7.3 0.8 7.3 3.6 Q7.3 6.4 2.3 6.4 H1.6 L7.5 12" fill="none" stroke="currentColor" stroke-width="1.536" stroke-linejoin="miter"/></g></svg>
<span class="t s" style="left:1021.44px;top:703px;font-size:16px;color:#ffffff;letter-spacing:0.400px;">0.00</span>
<span class="t s" style="left:1150.34px;top:703px;font-size:16px;color:#ffffff;letter-spacing:1.800px;">0%</span>
<span class="t s" style="left:1234.14px;top:703px;font-size:16px;color:#ffffff;letter-spacing:1.800px;">0%</span>
<svg class="a" style="left:1318.5px;top:704px;" width="11.0" height="13" viewBox="0 0 11.0 13"><g transform="scale(1.0000)" style="color:#5fd37a"><path d="M0.5 0.8 H9.5 M0.5 3.6 H9.5 M2.3 0.8 Q7.3 0.8 7.3 3.6 Q7.3 6.4 2.3 6.4 H1.6 L7.5 12" fill="none" stroke="currentColor" stroke-width="1.800" stroke-linejoin="miter"/></g></svg>
<span class="t sb" style="left:1329.44px;top:703px;font-size:16px;color:#5fd37a;font-weight:700;letter-spacing:0.667px;">0.00</span>
<div class="a" style="left:1488px;top:694px;width:30px;height:31px;box-sizing:border-box;border:1px solid #ee5a5a;border-radius:6px"></div>
<svg class="a" style="left:1495px;top:701px;" width="16" height="18" viewBox="0 0 16 18"><path d="M5.2 1.2 H10.8 L11.4 2.6 H14.4 V4.4 H1.6 V2.6 H4.6 Z" fill="#ff6262"/><path d="M2.6 5.4 H13.4 L12.6 15.6 Q12.5 16.6 11.5 16.6 H4.5 Q3.5 16.6 3.4 15.6 Z" fill="#ff6262"/></svg>
<div class="a" style="left:312px;top:806px;width:1296px;height:188px;box-sizing:border-box;border:1px solid rgba(0,0,0,0.08);border-radius:3px"></div>
<div class="a" style="left:312px;top:806px;width:1296px;height:40px;background:#7b61ff;border-radius:2px 2px 0 0"></div>
<span class="t s" style="left:328.20px;top:817.3px;font-size:20px;color:#ffffff;letter-spacing:0.181px;">Additional Information</span>
<span class="t sb" style="left:326.96px;top:868px;font-size:16px;color:#f3f4f6;font-weight:700;letter-spacing:0.850px;">Notes</span>
<div class="a" style="left:328px;top:896px;width:1264px;height:80px;box-sizing:border-box;border:1px solid #a3aac0;border-radius:6px"></div>
<span class="t s" style="left:338.40px;top:904.4px;font-size:16px;color:#c3c5cc;letter-spacing:0.080px;">Any additional notes or terms...</span>
<svg class="a" style="left:1580px;top:964px;" width="10" height="10" viewBox="0 0 10 10"><path d="M2 9 L9 2 M5.5 9 L9 5.5" stroke="#a3a9ba" stroke-width="1"/></svg>
<div class="a" style="left:1410px;top:1016px;width:67px;height:32px;box-sizing:border-box;border:1px solid #8e93a0;border-radius:6px"></div>
<span class="t s" style="left:1419.80px;top:1025.2px;font-size:16px;color:#a4a8b2;letter-spacing:-0.400px;">Cancel</span>
<div class="a" style="left:1493px;top:1016px;width:115px;height:32px;box-sizing:border-box;border:1px solid #7b61ff;border-radius:6px;background:#2d2a5c"></div>
<svg class="a" style="left:1503px;top:1024px;" width="16" height="16" viewBox="0 0 16 16"><path d="M1 2.8 Q1 1 2.8 1 H11.2 L15 4.8 V13.2 Q15 15 13.2 15 H2.8 Q1 15 1 13.2 Z" fill="#ffffff"/><rect x="3.2" y="3" width="8" height="3.6" fill="#2d2a5c"/><circle cx="8" cy="10.6" r="2" fill="#2d2a5c"/></svg>
<span class="t s" style="left:1524.90px;top:1025.2px;font-size:16px;color:#ffffff;letter-spacing:-0.030px;">Create Bill</span>
<svg class="a" style="left:912px;top:514px;" width="18" height="24" viewBox="0 0 18 24"><path d="M4.3 4.1 L4.3 18.6 L7.6 15.5 L9.9 20.3 Q10.6 21.3 11.6 20.8 Q12.5 20.2 12.1 19.2 L9.9 14.5 L14.8 14.3 Z" fill="#000" stroke="#fff" stroke-width="1.25" stroke-linejoin="round"/></svg>
</body></html>
